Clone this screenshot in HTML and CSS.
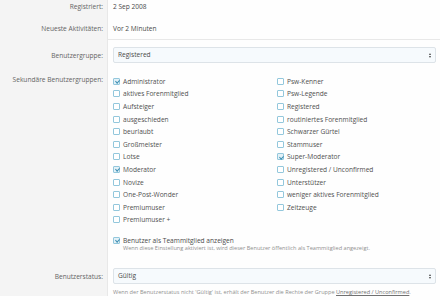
FILE: index.html
```html
<!DOCTYPE html>
<html>
<head>
<meta charset="utf-8">
<link rel="stylesheet" href="styles.css">
</head>
<body>
<div class="form">
  <div class="row r1">
    <div class="label">Registriert:</div>
    <div class="value">2 Sep 2008</div>
  </div>
  <div class="row r2">
    <div class="label">Neueste Aktivitäten:</div>
    <div class="value sep">Vor 2 Minuten</div>
  </div>
  <div class="row r3">
    <div class="label">Benutzergruppe:</div>
    <div class="value"><div class="select">Registered<span class="arrows"></span></div></div>
  </div>
  <div class="row r4">
    <div class="label">Sekundäre Benutzergruppen:</div>
    <div class="value">
      <ul class="checks">
        <li><span class="cb on"></span>Administrator</li>
        <li><span class="cb"></span>aktives Forenmitglied</li>
        <li><span class="cb"></span>Aufsteiger</li>
        <li><span class="cb"></span>ausgeschieden</li>
        <li><span class="cb"></span>beurlaubt</li>
        <li><span class="cb"></span>Großmeister</li>
        <li><span class="cb"></span>Lotse</li>
        <li><span class="cb on"></span>Moderator</li>
        <li><span class="cb"></span>Novize</li>
        <li><span class="cb"></span>One-Post-Wonder</li>
        <li><span class="cb"></span>Premiumuser</li>
        <li><span class="cb"></span>Premiumuser +</li>
        <li><span class="cb"></span>Psw-Kenner</li>
        <li><span class="cb"></span>Psw-Legende</li>
        <li><span class="cb"></span>Registered</li>
        <li><span class="cb"></span>routiniertes Forenmitglied</li>
        <li><span class="cb"></span>Schwarzer Gürtel</li>
        <li><span class="cb"></span>Stammuser</li>
        <li><span class="cb on"></span>Super-Moderator</li>
        <li><span class="cb"></span>Unregistered / Unconfirmed</li>
        <li><span class="cb"></span>Unterstützer</li>
        <li><span class="cb"></span>weniger aktives Forenmitglied</li>
        <li><span class="cb"></span>Zeitzeuge</li>
      </ul>
      <div class="team"><span class="cb on"></span>Benutzer als Teammitglied anzeigen</div>
      <div class="hint indent">Wenn diese Einstellung aktiviert ist, wird dieser Benutzer öffentlich als Teammitglied angezeigt.</div>
    </div>
  </div>
  <div class="row r5">
    <div class="label">Benutzerstatus:</div>
    <div class="value">
      <div class="select">Gültig<span class="arrows"></span></div>
      <div class="hint">Wenn der Benutzerstatus nicht 'Gültig' ist, erhält der Benutzer die Rechte der Gruppe <u>Unregistered / Unconfirmed</u>.</div>
    </div>
  </div>
</div>
</body>
</html>
```
FILE: styles.css
```css
* { box-sizing: border-box; }
html, body { margin: 0; padding: 0; }
body {
  width: 440px;
  height: 300px;
  overflow: hidden;
  background: #fefefe;
  font-family: "Open Sans", "Noto Sans", sans-serif;
  font-size: 6.6px;
  color: #4a4a4a;
}
.form { display: flex; flex-direction: column; }
.row {
  display: grid;
  grid-template-columns: 108px 1fr;
}
.label {
  background: #f4f4f4;
  border-right: 1px solid #e8e8e8;
  text-align: right;
  padding-right: 4px;
  color: #646464;
  line-height: 9px;
}
.value { padding-left: 5px; padding-right: 4px; line-height: 9px; }
.r1 .label, .r1 .value { padding-top: 2px; height: 22px; }
.r2 .label, .r2 .value { padding-top: 2px; height: 18px; }
.value.sep { border-bottom: 1px solid #e8e8e8; }
.r3 .label { padding-top: 11px; height: 35px; }
.r3 .value { padding-top: 7px; }
.select {
  position: relative;
  height: 16px;
  border: 1px solid #dde3e8;
  border-radius: 2px;
  background: #f6fafd;
  padding-left: 4px;
  line-height: 14px;
  color: #4a4a4a;
}
.arrows {
  position: absolute;
  right: 3px;
  top: 5px;
  width: 3px;
  height: 5px;
}
.arrows::before, .arrows::after {
  content: "";
  position: absolute;
  left: 0;
  border-left: 1.5px solid transparent;
  border-right: 1.5px solid transparent;
}
.arrows::before { top: 0; border-bottom: 2px solid #444; }
.arrows::after { bottom: 0; border-top: 2px solid #444; }
.r4 .label { padding-top: 0; }
.checks {
  list-style: none;
  margin: 0;
  padding: 0;
  display: grid;
  grid-auto-flow: column;
  grid-template-rows: repeat(12, 12.6px);
  grid-template-columns: 164px 1fr;
  color: #505050;
}
.checks li {
  display: flex;
  align-items: center;
  gap: 3px;
  line-height: 9px;
}
.cb {
  display: inline-block;
  flex: none;
  width: 7px;
  height: 7px;
  border: 1px solid #93c7dc;
  border-radius: 1px;
  background: #fff;
  position: relative;
}
.cb.on { background: #e3f1f7; }
.cb.on::after {
  content: "";
  position: absolute;
  left: 1.5px;
  top: 0.3px;
  width: 1.6px;
  height: 3.2px;
  border-right: 1px solid #3f8fb3;
  border-bottom: 1px solid #3f8fb3;
  transform: rotate(45deg);
}
.team {
  margin-top: 10px;
  display: flex;
  align-items: center;
  gap: 3px;
  color: #4a4a4a;
}
.hint {
  font-size: 5.6px;
  color: #909090;
  line-height: 7px;
}
.hint.indent { padding-left: 10px; }
.r4 .value { padding-bottom: 16px; }
.r5 .label { padding-top: 4px; }
.r5 .value { padding-top: 0; }
.r5 .hint { margin-top: 5px; }
u { color: #707070; }
```
